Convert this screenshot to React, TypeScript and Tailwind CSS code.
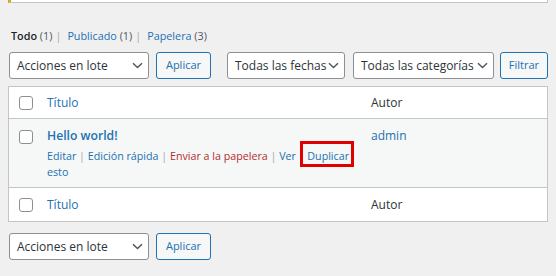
import React from "react";

function Chevron() {
  return (
    <svg width="11" height="7" viewBox="0 0 11 7" className="shrink-0">
      <path d="M1 1.2l4.5 4.3 4.5-4.3" fill="none" stroke="#50575e" strokeWidth="1.5" />
    </svg>
  );
}

function Select({ label, w }: { label: string; w: string }) {
  return (
    <div className={`${w} h-[27px] flex items-center justify-between pl-[7px] pr-[5px] bg-white border border-[#8c8f94] rounded-[3px] text-[12px] text-[#2c3338] whitespace-nowrap`}>
      <span>{label}</span>
      <Chevron />
    </div>
  );
}

function Btn({ label, w }: { label: string; w: string }) {
  return (
    <div className={`${w} h-[27px] flex items-center justify-center bg-[#f6f7f7] border border-[#2271b1] rounded-[3px] text-[11px] text-[#2271b1]`}>
      {label}
    </div>
  );
}

function Check() {
  return <div className="w-[14px] h-[14px] bg-white border border-[#8c8f94] rounded-[3px]" />;
}

const StatusSep = () => <span className="inline-block w-[6px] ml-[3px] mr-[6px] text-center text-[#a7aaad]">|</span>;

export default function App() {
  return (
    <div className="w-[556px] h-[276px] bg-[#f0f0f1] overflow-hidden" style={{ fontFamily: '"Open Sans", sans-serif' }}>
      <div className="mx-[8px] h-[3px] bg-white border-l-[3px] border-l-[#dba617] border-b border-b-[#c3c4c7] border-r border-r-[#c3c4c7]" />
      <div className="pl-[11px] mt-[24px] h-[17px] leading-[17px] text-[10.8px] text-[#50575e] whitespace-nowrap">
        <span className="text-[#1d2327] font-semibold">Todo</span> (1)
        <StatusSep />
        <span className="text-[#2271b1]">Publicado</span> (1)
        <StatusSep />
        <span className="text-[#2271b1]">Papelera</span> (3)
      </div>
      <div className="flex items-center mt-[8px] pl-[9px]">
        <Select label="Acciones en lote" w="w-[140px]" />
        <div className="w-[7px]" />
        <Btn label="Aplicar" w="w-[55px]" />
        <div className="w-[16px]" />
        <Select label="Todas las fechas" w="w-[118px]" />
        <div className="w-[8px]" />
        <Select label="Todas las categorías" w="w-[141px]" />
        <div className="w-[6px]" />
        <Btn label="Filtrar" w="w-[48px]" />
      </div>
      <div className="mx-[8px] mt-[7px] border border-[#c3c4c7] bg-white text-[12px]">
        <div className="grid grid-cols-[28px_324px_1fr] h-[32px] items-center border-b border-[#c3c4c7]">
          <div className="pl-[10px]"><Check /></div>
          <div className="pl-[10px] text-[#2271b1]">Título</div>
          <div className="pl-[10px] text-[#2c3338]">Autor</div>
        </div>
        <div className="grid grid-cols-[28px_324px_1fr] bg-[#f6f7f7] pt-[8px] pb-[7px] border-b border-[#c3c4c7]">
          <div className="pl-[10px] pt-[3px]"><Check /></div>
          <div className="pl-[10px] pr-[10px]">
            <div className="text-[#2271b1] font-semibold text-[12.2px] leading-[18px]">Hello world!</div>
            <div className="mt-[3px] text-[10.7px] leading-[16px] text-[#2271b1]">
              Editar <span className="text-[#a7aaad]">|</span> Edición rápida <span className="text-[#a7aaad]">|</span>{" "}
              <span className="text-[#b32d2e]">Enviar a la papelera</span> <span className="text-[#a7aaad]">|</span> Ver{" "}
              <span className="text-[#a7aaad]">|</span>{" "}
              <span className="relative">
                Duplicar
                <span className="absolute -left-[7px] -right-[5px] -top-[8px] -bottom-[4px] border-[3px] border-[#e00000]" />
              </span>{" "}
              esto
            </div>
          </div>
          <div className="pl-[10px] text-[#2271b1] leading-[18px]">admin</div>
        </div>
        <div className="grid grid-cols-[28px_324px_1fr] h-[33px] items-center">
          <div className="pl-[10px]"><Check /></div>
          <div className="pl-[10px] text-[#2271b1]">Título</div>
          <div className="pl-[10px] text-[#2c3338]">Autor</div>
        </div>
      </div>
      <div className="flex items-center mt-[11px] pl-[9px]">
        <Select label="Acciones en lote" w="w-[140px]" />
        <div className="w-[7px]" />
        <Btn label="Aplicar" w="w-[55px]" />
      </div>
    </div>
  );
}
